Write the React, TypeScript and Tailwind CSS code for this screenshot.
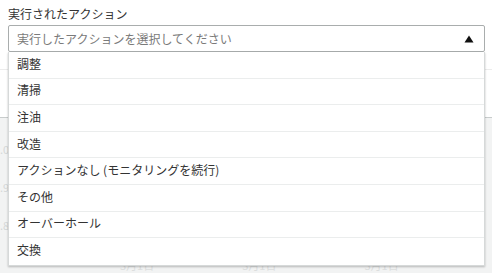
import React from 'react';

const actions = [
  '調整',
  '清掃',
  '注油',
  '改造',
  'アクションなし (モニタリングを続行)',
  'その他',
  'オーバーホール',
  '交換',
];

// 背後のチャート（ドロップダウンに隠れている部分）
function ChartBehind() {
  return (
    <div className="flex flex-col">
      <div className="h-[18px] border-b border-[#ececec]" />
      <div className="h-[48px] border-b border-[#c8cccc]" />
      <div className="relative h-[155px] bg-[#f2f3f3]">
        <div className="flex flex-col pt-[26px] gap-[27px] text-[11px] leading-none text-[#d5d8d8]">
          <span>.0</span>
          <span>.9</span>
          <span>.8</span>
        </div>
        <div className="absolute bottom-[2px] left-[120px] flex gap-[88px] text-[11px] leading-none text-[#dcdede]">
          <span>3月1日</span>
          <span>3月1日</span>
          <span>3月1日</span>
        </div>
      </div>
    </div>
  );
}

export default function App() {
  return (
    <div
      className="relative w-[492px] h-[273px] overflow-hidden bg-white text-[#333]"
      style={{ fontFamily: '"Noto Sans CJK JP", "Noto Sans", sans-serif' }}
    >
      <div className="pl-2 pr-[7px] pt-[5px]">
        <label className="block text-[12px] leading-[18px] text-[#333]">実行されたアクション</label>
        <div className="mt-[2px] h-[27px] flex items-center justify-between rounded-[2px] border border-[#a9adad] bg-white pl-[8px] pr-[10px]">
          <span className="text-[12px] text-[#7a7a7a]">実行したアクションを選択してください</span>
          <svg width="10" height="8" viewBox="0 0 10 8" className="mt-[1px]">
            <path d="M5 0.5 L9.5 7.5 L0.5 7.5 Z" fill="#111" />
          </svg>
        </div>
      </div>

      <ChartBehind />

      {/* 選択肢リスト */}
      <ul className="absolute left-[8px] top-[52px] w-[477px] bg-white border-x border-b border-[#d6d9d9] shadow-[0_1px_2px_rgba(0,0,0,0.25)]">
        {actions.map((a, i) => (
          <li
            key={a}
            className={`h-[26.6px] flex items-center pl-[8px] pb-[2px] text-[12px] text-[#333] ${i < actions.length - 1 ? 'border-b border-[#ebeded]' : ''}`}
          >
            {a}
          </li>
        ))}
      </ul>
    </div>
  );
}
